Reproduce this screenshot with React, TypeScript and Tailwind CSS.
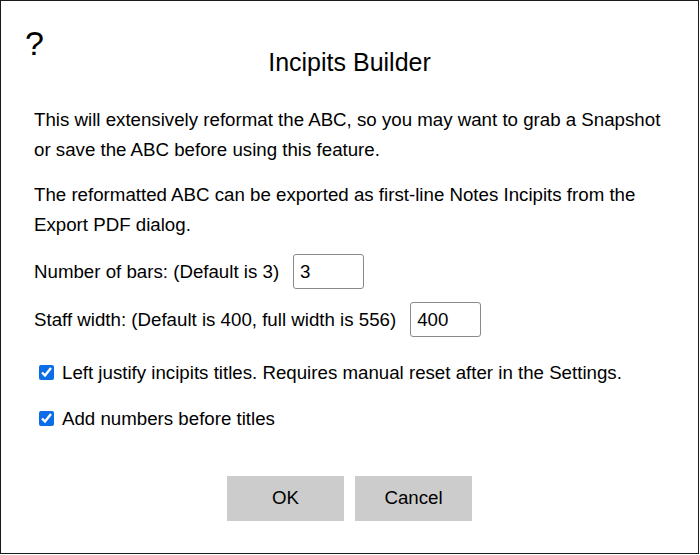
import React from "react";

export default function App() {
  return (
    <div className="w-[700px] h-[555px] bg-white" style={{ fontFamily: '"Liberation Sans", Arial, sans-serif' }}>
      <div className="relative w-[699px] h-[554px] border border-[#1a1a1a] bg-white text-black pl-[33px] pr-[20px]">
        <div className="absolute left-[24px] top-[21px] text-[34px] leading-[42px] text-black select-none">?</div>
        <div className="pt-[46px] text-center text-[25px] leading-[30px] pr-[13px]">Incipits Builder</div>
        <p className="mt-[28px] text-[18.7px] leading-[29.5px]">
          This will extensively reformat the ABC, so you may want to grab a Snapshot or save the ABC before using this feature.
        </p>
        <p className="mt-[16px] text-[18.7px] leading-[29.5px]">
          The reformatted ABC can be exported as first-line Notes Incipits from the Export PDF dialog.
        </p>
        <div className="mt-[15px] flex items-center text-[18.7px] leading-[29px]">
          <span>Number of bars: (Default is 3)</span>
          <input
            readOnly
            value="3"
            className="ml-[14px] w-[71px] h-[35px] border border-[#8a8a8a] rounded-[3px] px-[6px] text-[18.7px] text-black outline-none"
            style={{ fontFamily: '"Liberation Sans", Arial, sans-serif' }}
          />
        </div>
        <div className="mt-[13px] flex items-center text-[18.7px] leading-[29px]">
          <span>Staff width: (Default is 400, full width is 556)</span>
          <input
            readOnly
            value="400"
            className="ml-[14px] w-[71px] h-[35px] border border-[#8a8a8a] rounded-[3px] px-[6px] text-[18.7px] text-black outline-none"
            style={{ fontFamily: '"Liberation Sans", Arial, sans-serif' }}
          />
        </div>
        <label className="mt-[21px] flex items-center text-[18.7px] leading-[29px]">
          <input type="checkbox" defaultChecked className="ml-[5px] mr-[8px] w-[15px] h-[15px] accent-[#0b6ee6]" />
          <span>Left justify incipits titles. Requires manual reset after in the Settings.</span>
        </label>
        <label className="mt-[17px] flex items-center text-[18.7px] leading-[29px]">
          <input type="checkbox" defaultChecked className="ml-[5px] mr-[8px] w-[15px] h-[15px] accent-[#0b6ee6]" />
          <span>Add numbers before titles</span>
        </label>
        <div className="mt-[43px] flex justify-center gap-[11px] pr-[13px]">
          <button className="w-[117px] h-[45px] bg-[#cccccc] text-[18.7px] text-black">OK</button>
          <button className="w-[117px] h-[45px] bg-[#cccccc] text-[18.7px] text-black">Cancel</button>
        </div>
      </div>
    </div>
  );
}
